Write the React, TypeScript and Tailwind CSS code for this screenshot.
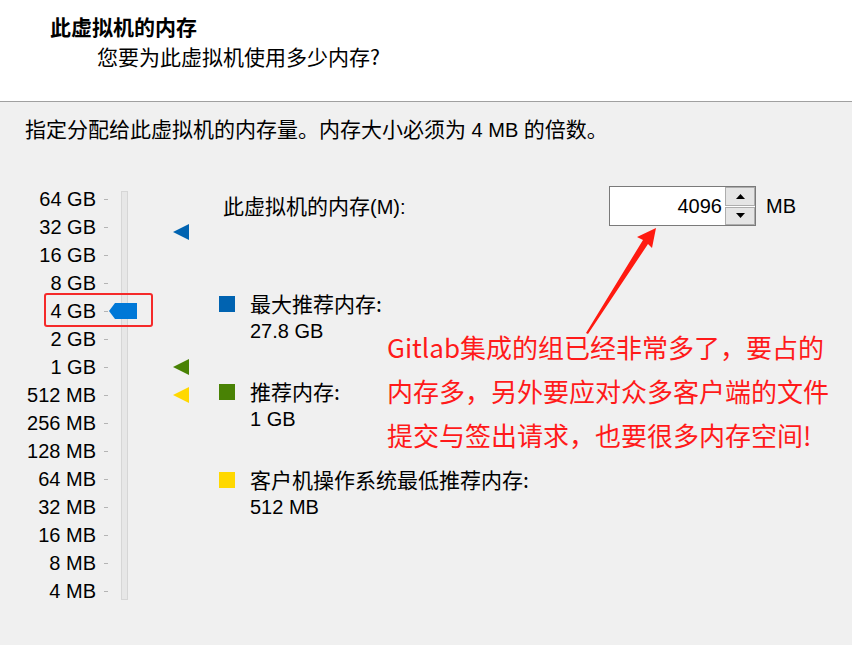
import React from "react";

const sizes = [
  "64 GB", "32 GB", "16 GB", "8 GB", "4 GB", "2 GB", "1 GB", "512 MB",
  "256 MB", "128 MB", "64 MB", "32 MB", "16 MB", "8 MB", "4 MB",
];

const legend = [
  { color: "bg-[#0063b1]", label: "最大推荐内存:", value: "27.8 GB" },
  { color: "bg-[#498205]", label: "推荐内存:", value: "1 GB" },
  { color: "bg-[#ffd800]", label: "客户机操作系统最低推荐内存:", value: "512 MB" },
];

const cjk = "font-['Noto_Sans_CJK_SC',sans-serif]";

function Marker({ top, fill }: { top: number; fill: string }) {
  return (
    <svg className="absolute left-[173px]" style={{ top }} width="16" height="16" viewBox="0 0 16 16">
      <polygon points="16,0 16,16 0,8" fill={fill} />
    </svg>
  );
}

function Slider() {
  return (
    <div className="relative w-[219px] shrink-0">
      {sizes.map((s) => (
        <div key={s} className="flex h-[28px] items-center">
          <span className="w-[96px] text-right leading-none">{s}</span>
          <span className="ml-[8px] h-px w-[4px] bg-[#b4b4b4]" />
        </div>
      ))}
      {/* track */}
      <div className="absolute left-[121px] top-[6px] h-[409px] w-[7px] border border-[#d6d6d6] bg-[#e7e7e7]" />
      {/* thumb at 4 GB */}
      <svg className="absolute left-[109px] top-[118px]" width="28" height="16" viewBox="0 0 28 16">
        <polygon points="0,8 6,0 28,0 28,16 6,16" fill="#0078d7" />
      </svg>
      <Marker top={39} fill="#0063b1" />
      <Marker top={174} fill="#498205" />
      <Marker top={202} fill="#ffd800" />
      {/* highlight box */}
      <div className="absolute left-[44px] top-[108px] h-[34px] w-[109px] rounded-[3px] border-2 border-[#f52a2a]" />
    </div>
  );
}

export default function App() {
  return (
    <div className="relative h-[645px] w-[852px] overflow-hidden bg-[#f0f0f0] font-['Liberation_Sans','Noto_Sans_CJK_SC',sans-serif] text-[20px] text-black">
      {/* header */}
      <div className="h-[102px] border-b border-[#a0a0a0] bg-white">
        <div className={`pl-[50px] pt-[12px] text-[21px] font-bold leading-[28px] ${cjk}`}>此虚拟机的内存</div>
        <div className={`mt-[2px] pl-[97px] text-[21px] leading-[28px] ${cjk}`}>您要为此虚拟机使用多少内存?</div>
      </div>

      <div className={`mt-[12px] pl-[25px] text-[21px] leading-[28px] ${cjk}`}>
        指定分配给此虚拟机的内存量。内存大小必须为
        <span className="font-['Liberation_Sans'] text-[20px]"> 4 MB </span>
        的倍数。
      </div>

      <div className="mt-[41px] flex">
        <Slider />

        <div className="flex flex-col">
          <div className="flex h-[42px] items-center">
            <span className={`w-[390px] pl-[4px] text-[21px] leading-none ${cjk}`}>
              此虚拟机的内存<span className="font-['Liberation_Sans'] text-[20px]">(M):</span>
            </span>
            <div className="flex h-[40px] border border-[#7a7a7a] bg-white">
              <div className="flex w-[115px] items-center justify-end pr-[3px] text-[20px] leading-none">4096</div>
              <div className="flex w-[30px] flex-col gap-px bg-white">
                <button className="flex flex-1 items-center justify-center border border-[#adadad] bg-[#e5e5e5]">
                  <svg width="9" height="5" viewBox="0 0 9 5"><polygon points="0,5 4.5,0 9,5" fill="#000" /></svg>
                </button>
                <button className="flex flex-1 items-center justify-center border border-[#adadad] bg-[#e5e5e5]">
                  <svg width="9" height="5" viewBox="0 0 9 5"><polygon points="0,0 9,0 4.5,5" fill="#000" /></svg>
                </button>
              </div>
            </div>
            <span className="ml-[10px] leading-none">MB</span>
          </div>

          <div className="mt-[62px] flex flex-col gap-[32px]">
            {legend.map((l) => (
              <div key={l.label} className="flex">
                <span className={`mt-[7px] h-[16px] w-[16px] ${l.color}`} />
                <div className="ml-[15px] flex flex-col">
                  <span className={`h-[28px] text-[21px] leading-[28px] ${cjk}`}>{l.label}</span>
                  <span className="h-[28px] leading-[28px]">{l.value}</span>
                </div>
              </div>
            ))}
          </div>
        </div>
      </div>

      {/* annotation */}
      <svg className="pointer-events-none absolute left-0 top-0" width="852" height="645">
        <polygon points="656,228 652,248 648,244 588,334 586,333 643,240 637,237" fill="#ff1a10" />
      </svg>
      <div className={`absolute left-[387px] top-[325px] text-[26px] leading-[44px] text-[#ff1a1a] ${cjk}`}>
        <div>Gitlab集成的组已经非常多了，要占的</div>
        <div>内存多，另外要应对众多客户端的文件</div>
        <div>提交与签出请求，也要很多内存空间!</div>
      </div>
    </div>
  );
}
